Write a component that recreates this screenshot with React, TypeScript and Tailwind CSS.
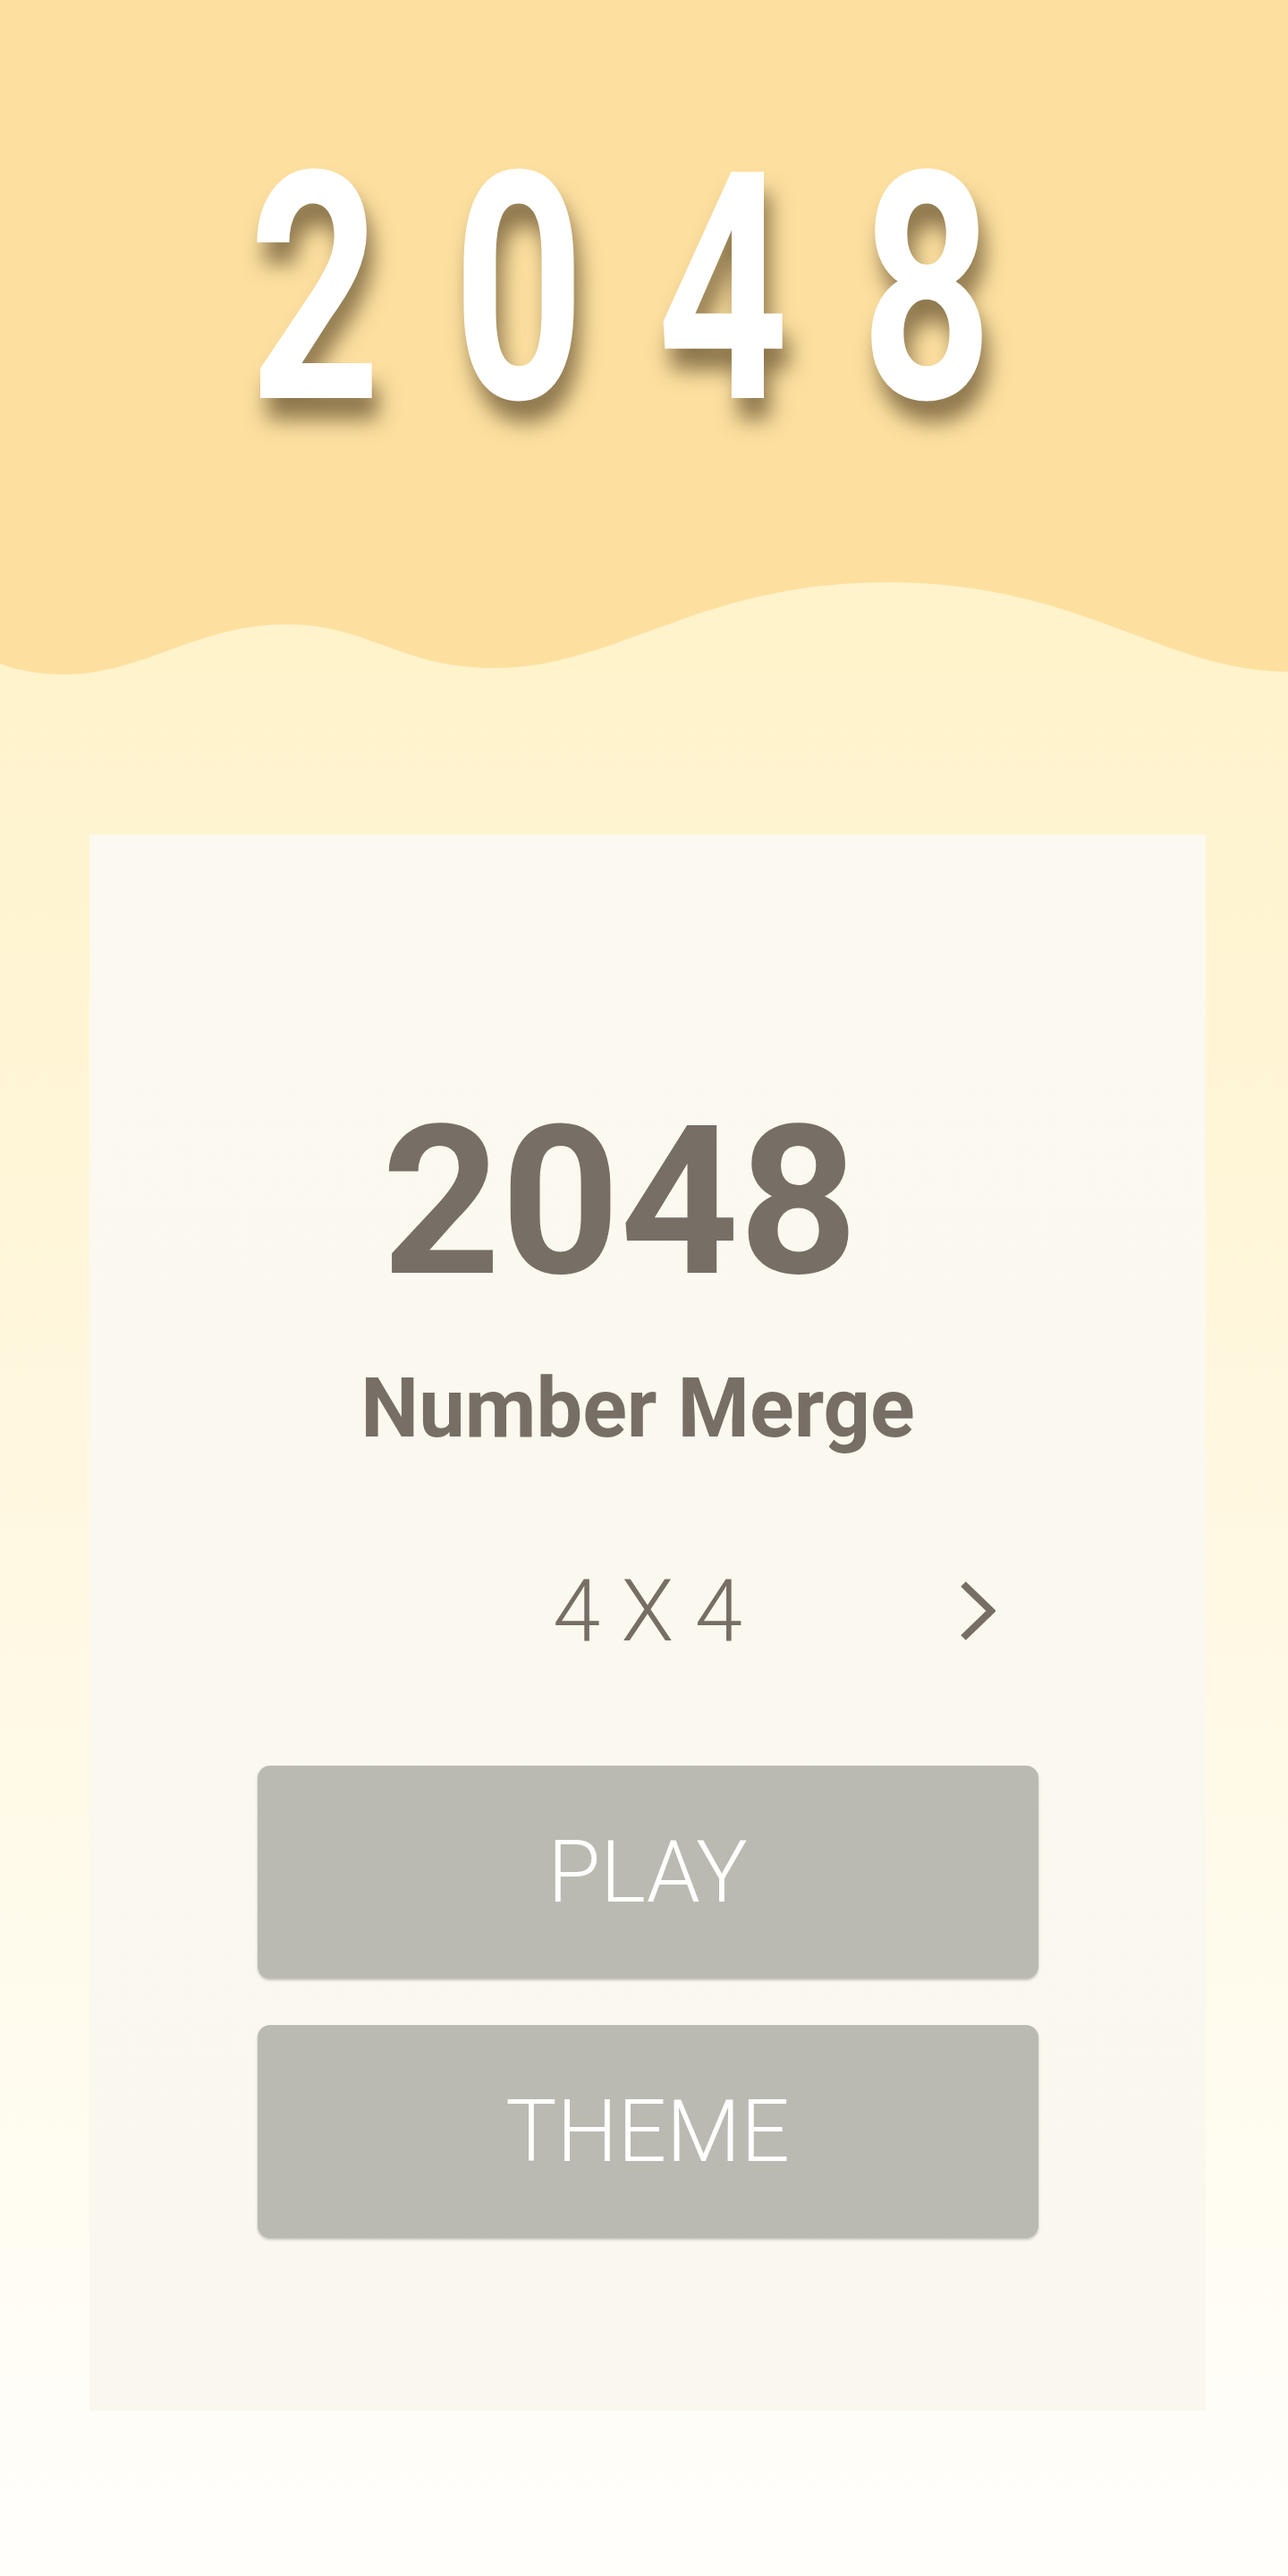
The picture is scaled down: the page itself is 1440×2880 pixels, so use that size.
export default function App() {
  return (
    <div className="min-h-[2880px] w-full bg-linear-to-b from-[#fff3cc] from-[26%] to-[#fffefb] font-['Roboto',sans-serif]">
      <Header />
      <div className="mt-[173px] flex justify-center pl-[8px]">
        <MenuCard />
      </div>
    </div>
  );
}

const Header = () => {
  const digits = ['2', '0', '4', '8'];
  return (
    <div>
      <div className="h-[640px] bg-[#fde0a0] pt-[146px]">
        <div className="flex justify-center pr-[52px]">
          {digits.map((d) => (
            <span
              key={d}
              className="block w-[228px] scale-x-[0.72] text-center text-[356px] font-bold leading-none text-white [text-shadow:10px_24px_28px_rgba(70,52,25,0.62)]">
              {d}
            </span>
          ))}
        </div>
      </div>
      {/* wavy edge under the header */}
      <svg
        className="block h-[120px] w-full"
        viewBox="0 0 1440 120"
        preserveAspectRatio="none">
        <path
          d="M0 0 H1440 V111 C1300 111 1210 11 992 11 C780 11 690 107 551 107 C450 107 410 58 321 58 C220 58 160 114 73 114 C40 114 15 108 0 102 Z"
          fill="#fde0a0"
        />
      </svg>
    </div>
  );
};

const MenuCard = () => {
  return (
    <div className="flex h-[1762px] w-[1248px] flex-col items-center bg-linear-to-b from-[#fbf9f0] to-[#faf7ee] pt-[295px]">
      <div className="pr-[62px] text-[232px] font-bold leading-none text-[#776e65]">
        2048
      </div>
      <div className="mt-[69px] pr-[22px] text-[92px] font-bold leading-none text-[#776e65]">
        Number Merge
      </div>

      <div className="mt-[132px] grid w-[873px] grid-cols-[1fr_auto_1fr] items-center">
        <div />
        <div className="text-[96px] font-light leading-none text-[#776e65]">
          4 X 4
        </div>
        <div className="flex justify-end pr-[48px]">
          <svg width="40" height="68" viewBox="0 0 40 68" fill="none">
            <path
              d="M4 4 L35 34 L4 64"
              stroke="#776e65"
              strokeWidth="8"
            />
          </svg>
        </div>
      </div>

      <div className="mt-[125px] flex flex-col gap-[52px]">
        <MenuButton label="PLAY" />
        <MenuButton label="THEME" />
      </div>
    </div>
  );
};

const MenuButton = ({ label }: { label: string }) => (
  <button
    type="button"
    className="flex h-[238px] w-[873px] items-center justify-center rounded-[14px] bg-[#bbbab2] text-[96px] font-light leading-none text-white shadow-[0_2px_3px_rgba(0,0,0,0.22)]">
    {label}
  </button>
);
